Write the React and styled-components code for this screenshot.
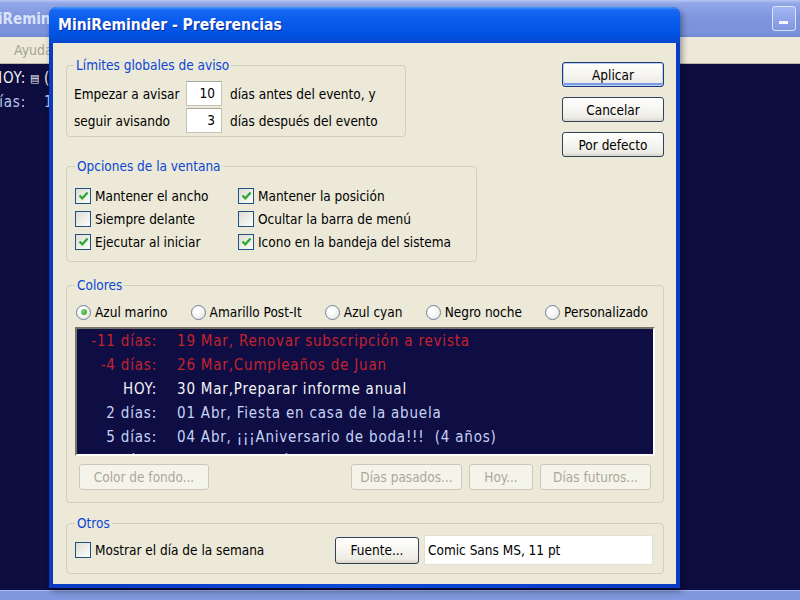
import React from "react";
import styled, { createGlobalStyle, css } from "styled-components";

const GlobalStyle = createGlobalStyle`
  *, *::before, *::after { box-sizing: border-box; }
  html, body { margin: 0; padding: 0; background: #0d0d3f; }
  body {
    width: 800px;
    height: 600px;
    overflow: hidden;
    font-family: "DejaVu Sans Condensed", "DejaVu Sans", sans-serif;
    font-stretch: condensed;
  }
`;

const listFont = `"Comic Sans MS", "DejaVu Sans", sans-serif`;

const Desktop = styled.div`
  position: relative;
  width: 800px;
  height: 600px;
  overflow: hidden;
`;

/* main window, inactive, behind the dialog */
const BackWindow = styled.div`
  display: flex;
  flex-direction: column;
  height: 100%;
`;

const BackTitle = styled.div`
  flex: none;
  height: 37px;
  display: flex;
  align-items: center;
  justify-content: space-between;
  padding: 0 4px 0 0;
  background: linear-gradient(180deg, #b7c6f3 0px, #93a8e8 3px, #7f96de 45%, #7a92dc 90%, #6f87d2 100%);
  color: #dbe3fa;
  font-weight: bold;
  font-size: 15px;
`;

const BackTitleText = styled.span`
  margin-left: -2px;
`;

const MinButton = styled.div`
  width: 24px;
  height: 25px;
  border: 1px solid #dbe4fb;
  border-radius: 3px;
  background: linear-gradient(180deg, #a3b6f0, #7f97e4);
  display: flex;
  align-items: flex-end;
  padding: 0 0 6px 6px;

  &::after {
    content: "";
    width: 9px;
    height: 3px;
    background: #f4f6ff;
  }
`;

const BackMenu = styled.div`
  flex: none;
  height: 27px;
  display: flex;
  align-items: center;
  padding-left: 14px;
  background: #ece9d8;
  border-bottom: 1px solid #b9b7a8;
  color: #a6a392;
  font-size: 14px;
`;

const BackContent = styled.div`
  flex: 1;
  background: #0d0d3f;
  padding-top: 2px;
  font-family: ${listFont};
  font-size: 15px;
  letter-spacing: 0.8px;
`;

const BackLine = styled.div`
  display: grid;
  grid-template-columns: 26px 18px auto;
  height: 24px;
  align-items: center;
  white-space: pre;
  color: ${(p) => p.$color};
`;

const BackWhen = styled.span`
  display: flex;
  justify-content: flex-end;
`;

const BackMark = styled.span`
  font-size: 11px;
  text-align: center;
  color: #f0f0f0;
`;

const BackBottom = styled.div`
  flex: none;
  height: 10px;
  background: #8098dd;
  border-top: 1px solid #a9bbef;
`;

/* preferences dialog */
const Dialog = styled.div`
  position: absolute;
  left: 49px;
  top: 7px;
  width: 631px;
  height: 581px;
  display: flex;
  flex-direction: column;
  border-radius: 8px 8px 0 0;
  background: #0a3fcf;
  box-shadow: 2px 3px 6px rgba(0, 0, 20, 0.4);
`;

const TitleBar = styled.div`
  flex: none;
  height: 36px;
  display: flex;
  align-items: center;
  padding-left: 9px;
  border-radius: 8px 8px 0 0;
  background: linear-gradient(180deg, #4a9bff 0px, #1668f4 3px, #0a5ded 35%, #0053e2 75%, #0547cb 100%);
  color: #fff;
  font-weight: bold;
  font-size: 15.5px;
  text-shadow: 1px 1px 0 #0b2a9c;
`;

const Frame = styled.div`
  flex: 1;
  display: flex;
  padding: 0 4px 4px;
  background: linear-gradient(90deg, #0a3bc4, #0c4ad8 50%, #0a3bc4);
`;

const Body = styled.div`
  flex: 1;
  display: flex;
  flex-direction: column;
  padding: 14px 12px 0 13px;
  background: #ece9d8;
  font-size: 13.5px;
  color: #000;
`;

const TopRow = styled.div`
  display: flex;
  justify-content: space-between;
  align-items: flex-start;
`;

const Group = styled.fieldset`
  margin: ${(p) => p.$top || 0}px 0 0;
  width: ${(p) => (p.$width ? `${p.$width}px` : "auto")};
  min-width: 0;
  padding: ${(p) => p.$pad || "8px 8px 8px"};
  border: 1px solid #d0d0bf;
  border-radius: 4px;
`;

const Legend = styled.legend`
  padding: 0 2px;
  line-height: 16px;
  color: #0a46d6;
`;

const LimitGrid = styled.div`
  display: grid;
  grid-template-columns: 112px 36px auto;
  grid-auto-rows: 25px;
  row-gap: 2px;
  align-items: center;
`;

const NumberField = styled.div`
  height: 25px;
  width: 36px;
  background: #fff;
  border: 1px solid #c4c3ba;
  border-top-color: #a9a89f;
  text-align: right;
  padding-right: 6px;
  line-height: 23px;
`;

const AfterText = styled.span`
  padding-left: 8px;
`;

const ButtonColumn = styled.div`
  margin-top: 5px;
  display: flex;
  flex-direction: column;
  gap: 10px;
`;

const Button = styled.button`
  width: ${(p) => p.$w}px;
  height: ${(p) => p.$h || 25}px;
  padding: 0;
  font: inherit;
  font-size: 13.5px;
  color: #000;
  border: 1px solid #2f4259;
  border-radius: 3px;
  background: linear-gradient(180deg, #ffffff 0%, #f7f6f2 45%, #ecebe4 85%, #d8d4c6 100%);

  ${(p) =>
    p.$default &&
    css`
      border-color: #1d3a78;
      box-shadow: inset 0 0 0 1px #b8d0f8, inset 0 -2px 0 1px #7c9cea;
    `}

  ${(p) =>
    p.disabled &&
    css`
      border-color: #cbc9bc;
      color: #aca899;
      background: #f5f4ea;
    `}
`;

const OptionGrid = styled.div`
  display: grid;
  grid-template-columns: 163px auto;
  grid-auto-rows: 23px;
  align-items: center;
`;

const Check = styled.label`
  display: flex;
  align-items: center;
  gap: 4px;
  white-space: nowrap;
`;

const CheckBox = styled.span`
  flex: none;
  width: 16px;
  height: 16px;
  border: 1px solid #1f5280;
  background: linear-gradient(135deg, #dcdcd4 0%, #efefea 55%, #fbfbf9 100%);
  display: grid;
  place-items: center;
`;

function Checkbox({ checked, children }) {
  return (
    <Check>
      <CheckBox>
        {checked && (
          <svg width="11" height="11" viewBox="0 0 11 11">
            <path d="M1.5 5.5 L4.3 8.3 L9.6 2.6" fill="none" stroke="#2aa82a" strokeWidth="2.2" />
          </svg>
        )}
      </CheckBox>
      {children}
    </Check>
  );
}

const RadioRow = styled.div`
  display: flex;
  justify-content: space-between;
  align-items: center;
  height: 20px;
  padding: 0 7px 0 1px;
  margin-top: 1px;
`;

const RadioItem = styled.label`
  display: flex;
  align-items: center;
  gap: 4px;
  white-space: nowrap;
`;

const RadioDot = styled.span`
  flex: none;
  width: 15px;
  height: 15px;
  border-radius: 50%;
  border: 1px solid #6f8198;
  background: radial-gradient(circle at 35% 35%, #ffffff 20%, #e2e1da 100%);
  display: grid;
  place-items: center;

  &::after {
    content: "";
    width: 6px;
    height: 6px;
    border-radius: 50%;
    background: ${(p) => (p.$on ? "radial-gradient(circle at 35% 35%, #7bd67b, #21a121)" : "transparent")};
  }
`;

function Radio({ on, children }) {
  return (
    <RadioItem>
      <RadioDot $on={on} />
      {children}
    </RadioItem>
  );
}

const PreviewList = styled.div`
  margin-top: 5px;
  height: 129px;
  overflow: hidden;
  background: #0e0e44;
  border: 2px solid;
  border-color: #77766c #fdfdfb #fdfdfb #77766c;
  font-family: ${listFont};
  font-size: 15px;
  letter-spacing: 0.8px;
`;

const toneColor = {
  past: "#c4222e",
  today: "#f4f4f6",
  future: "#c6d3f5",
};

const PreviewRow = styled.div`
  display: grid;
  grid-template-columns: 80px auto;
  column-gap: 20px;
  height: 24px;
  align-items: center;
  white-space: pre;
  color: ${(p) => toneColor[p.$tone]};
`;

const When = styled.span`
  text-align: right;
`;

const ColorButtons = styled.div`
  display: flex;
  gap: 7px;
  margin-top: 8px;
  padding: 0 4px;

  & > :first-child {
    margin-right: auto;
  }
`;

const OtherRow = styled.div`
  display: flex;
  align-items: center;
  height: 30px;
  margin-top: 2px;
  padding-right: 2px;
`;

const Spacer = styled.div`
  flex: 1;
`;

const FontField = styled.div`
  margin-left: 5px;
  width: 229px;
  height: 30px;
  background: #fff;
  border: 1px solid #e3e1d6;
  padding-left: 3px;
  line-height: 28px;
`;

const entries = [
  { when: "-11 días:", text: "19 Mar, Renovar subscripción a revista", tone: "past" },
  { when: "-4 días:", text: "26 Mar,Cumpleaños de Juan", tone: "past" },
  { when: "HOY:", text: "30 Mar,Preparar informe anual", tone: "today" },
  { when: "2 días:", text: "01 Abr, Fiesta en casa de la abuela", tone: "future" },
  { when: "5 días:", text: "04 Abr, ¡¡¡Aniversario de boda!!!  (4 años)", tone: "future" },
  { when: "14 días:", text: "13 Abr, Revisión anual del coche", tone: "future" },
];

export default function App() {
  return (
    <Desktop>
      <GlobalStyle />
      <BackWindow>
        <BackTitle>
          <BackTitleText>iReminder</BackTitleText>
          <MinButton />
        </BackTitle>
        <BackMenu>Ayuda</BackMenu>
        <BackContent>
          <BackLine $color="#f2f2f2">
            <BackWhen>HOY:</BackWhen>
            <BackMark>▤</BackMark>
            <span>(30 Mar,Preparar informe anual)</span>
          </BackLine>
          <BackLine $color="#b9c8ee">
            <BackWhen>días:</BackWhen>
            <span />
            <span>13 Abr</span>
          </BackLine>
        </BackContent>
        <BackBottom />
      </BackWindow>

      <Dialog>
        <TitleBar>MiniReminder - Preferencias</TitleBar>
        <Frame>
          <Body>
            <TopRow>
              <Group $width={340} $pad="8px 7px 3px">
                <Legend>Límites globales de aviso</Legend>
                <LimitGrid>
                  <span>Empezar a avisar</span>
                  <NumberField>10</NumberField>
                  <AfterText>días antes del evento, y</AfterText>
                  <span>seguir avisando</span>
                  <NumberField>3</NumberField>
                  <AfterText>días después del evento</AfterText>
                </LimitGrid>
              </Group>
              <ButtonColumn>
                <Button $w={102} $default>Aplicar</Button>
                <Button $w={102}>Cancelar</Button>
                <Button $w={102}>Por defecto</Button>
              </ButtonColumn>
            </TopRow>

            <Group $width={411} $top={1} $pad="10px 8px 8px">
              <Legend>Opciones de la ventana</Legend>
              <OptionGrid>
                <Checkbox checked>Mantener el ancho</Checkbox>
                <Checkbox checked>Mantener la posición</Checkbox>
                <Checkbox>Siempre delante</Checkbox>
                <Checkbox>Ocultar la barra de menú</Checkbox>
                <Checkbox checked>Ejecutar al iniciar</Checkbox>
                <Checkbox checked>Icono en la bandeja del sistema</Checkbox>
              </OptionGrid>
            </Group>

            <Group $top={15} $pad="8px 8px 12px">
              <Legend>Colores</Legend>
              <RadioRow>
                <Radio on>Azul marino</Radio>
                <Radio>Amarillo Post-It</Radio>
                <Radio>Azul cyan</Radio>
                <Radio>Negro noche</Radio>
                <Radio>Personalizado</Radio>
              </RadioRow>
              <PreviewList>
                {entries.map((e) => (
                  <PreviewRow key={e.when} $tone={e.tone}>
                    <When>{e.when}</When>
                    <span>{e.text}</span>
                  </PreviewRow>
                ))}
              </PreviewList>
              <ColorButtons>
                <Button $w={130} $h={26} disabled>Color de fondo...</Button>
                <Button $w={111} $h={26} disabled>Días pasados...</Button>
                <Button $w={64} $h={26} disabled>Hoy...</Button>
                <Button $w={111} $h={26} disabled>Días futuros...</Button>
              </ColorButtons>
            </Group>

            <Group $top={12} $pad="2px 8px 8px">
              <Legend>Otros</Legend>
              <OtherRow>
                <Checkbox>Mostrar el día de la semana</Checkbox>
                <Spacer />
                <Button $w={84} $h={27}>Fuente...</Button>
                <FontField>Comic Sans MS, 11 pt</FontField>
              </OtherRow>
            </Group>
          </Body>
        </Frame>
      </Dialog>
    </Desktop>
  );
}
